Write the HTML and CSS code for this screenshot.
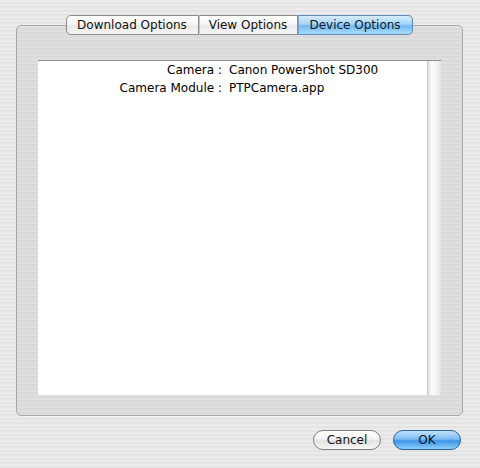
FILE: index.html
```html
<!DOCTYPE html>
<html>
<head>
<meta charset="utf-8">
<link rel="stylesheet" href="styles.css">
</head>
<body>
<div class="window">
  <div class="group">
    <div class="tabs">
      <div class="tab first">Download Options</div>
      <div class="tab middle">View Options</div>
      <div class="tab last selected">Device Options</div>
    </div>
    <div class="content">
      <div class="info">
        <div class="label">Camera :</div><div class="value">Canon PowerShot SD300</div>
        <div class="label">Camera Module :</div><div class="value">PTPCamera.app</div>
      </div>
      <div class="strip"></div>
    </div>
  </div>
  <div class="buttons">
    <div class="btn cancel">Cancel</div>
    <div class="btn ok">OK</div>
  </div>
</div>
</body>
</html>
```
FILE: styles.css
```css
html, body {
  margin: 0;
  padding: 0;
}
body {
  width: 480px;
  height: 468px;
  font-family: "DejaVu Sans", "Liberation Sans", sans-serif;
  font-size: 12px;
  color: #000;
  background: repeating-linear-gradient(to bottom, #ebebeb 0, #ebebeb 2px, #e4e4e4 2px, #e4e4e4 4px);
  overflow: hidden;
}
.window {
  display: flex;
  flex-direction: column;
  padding-top: 25px;
}
.group {
  margin-left: 16px;
  width: 445px;
  height: 389px;
  border: 1px solid #a9a9a9;
  border-radius: 5px;
  background: repeating-linear-gradient(to bottom, #dfdfdf 0, #dfdfdf 2px, #d9d9d9 2px, #d9d9d9 4px);
  box-shadow: 0 1px 0 #f4f4f4;
  display: flex;
  flex-direction: column;
}
.tabs {
  display: flex;
  justify-content: center;
  margin-top: -11px;
  height: 20px;
  padding-right: 1px;
}
.tab {
  box-sizing: border-box;
  height: 20px;
  line-height: 18px;
  text-align: center;
  border: 1px solid #8c8c8c;
  border-left: 1px solid #c4c4c4;
  background: linear-gradient(to bottom, #ffffff 0%, #f6f6f6 45%, #e9e9e9 55%, #f5f5f5 100%);
  color: #111;
  white-space: nowrap;
}
.tab.first {
  width: 133px;
  border-left: 1px solid #8c8c8c;
  border-radius: 5px 0 0 5px;
}
.tab.middle {
  width: 99px;
}
.tab.last {
  width: 115px;
  border-radius: 0 5px 5px 0;
}
.tab.selected {
  background: linear-gradient(to bottom, #d6ecfc 0%, #a5d4f8 45%, #73baf3 55%, #a9dbfb 100%);
  border-color: #5d87b4;
  border-left-color: #7aa3cd;
  color: #0c1a2c;
}
.content {
  margin: 25px 21px 0 21px;
  height: 334px;
  background: #fff;
  border-top: 1px solid #8e8e8e;
  display: flex;
}
.info {
  flex: 1;
  display: grid;
  grid-template-columns: 184px auto;
  column-gap: 7px;
  align-content: start;
  line-height: 18px;
}
.label {
  text-align: right;
}
.strip {
  width: 14px;
  background: linear-gradient(to right, #c9c9c9 0, #e8e8e8 2px, #fbfbfb 5px, #f3f3f3 10px, #e2e2e2 14px);
}
.buttons {
  display: flex;
  justify-content: flex-end;
  gap: 12px;
  padding-right: 19px;
  margin-top: 14px;
}
.btn {
  width: 66px;
  height: 18px;
  line-height: 18px;
  text-align: center;
  border-radius: 10px;
  font-size: 12px;
}
.cancel {
  border: 1px solid #7d7d7d;
  background: linear-gradient(to bottom, #ffffff 0%, #f2f2f2 45%, #e2e2e2 55%, #f7f7f7 100%);
  color: #111;
}
.ok {
  border: 1px solid #2a5f9e;
  background: linear-gradient(to bottom, #c2e2fb 0%, #7bbcf2 45%, #3e93e6 55%, #8ed0fb 100%);
  color: #0a1426;
}
```
